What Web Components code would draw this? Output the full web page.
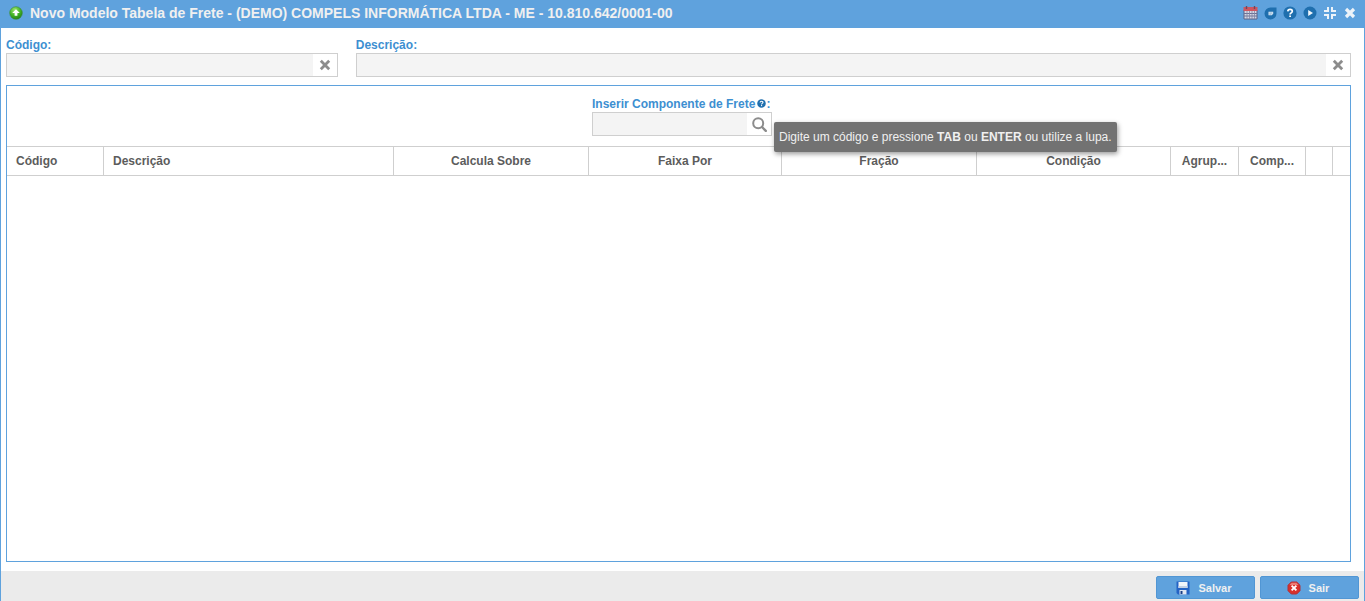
<!DOCTYPE html>
<html lang="pt-BR">
<head>
<meta charset="utf-8">
<title>Novo Modelo Tabela de Frete</title>
<style>
  html, body { height: 100%; }
  body {
    margin: 0;
    overflow: hidden;
    font: 12px/16px "Liberation Sans", Arial, sans-serif;
    --blue: #5fa2dd;
    --label: #3d8fd1;
    --line: #cfcfcf;
    --field: #f4f4f4;
  }
</style>
</head>
<body>

<app-window heading="Novo Modelo Tabela de Frete - (DEMO) COMPELS INFORMÁTICA LTDA - ME - 10.810.642/0001-00">
  <form-row>
    <text-field label="Código" icon="clear"></text-field>
    <text-field label="Descrição" icon="clear" class="wide"></text-field>
  </form-row>
  <frete-panel></frete-panel>
  <action-button slot="footer" icon="save">Salvar</action-button>
  <action-button slot="footer" icon="exit">Sair</action-button>
</app-window>

<script>
const icons = {
  add: `<svg width="14" height="14" viewBox="0 0 14 14"><defs><radialGradient id="g" cx=".4" cy=".25" r=".8"><stop offset="0" stop-color="#9be36c"/><stop offset=".55" stop-color="#43b426"/><stop offset="1" stop-color="#237d14"/></radialGradient></defs><circle cx="7" cy="7" r="6.3" fill="url(#g)" stroke="#3d8a39" stroke-width=".6"/><path d="M7 3.2 10.8 7H8.400v2.800H5.600V7H3.200z" fill="#fff"/></svg>`,
  calendar: `<svg width="15" height="14" viewBox="0 0 15 14"><path d="M1 4h13v9H1z" fill="#d5d8e4" stroke="#5f6284" stroke-width="1"/><path d="M.5 1h14v4H.5z" fill="#cf5660"/><path d="M3.500 0v3M11.500 0v3" stroke="#6b4a60" stroke-width="1.400"/><path d="M1 7.500h13M1 10h13" stroke="#6c7094" stroke-width="1"/><path d="M4 5v8M6.500 5v8M9 5v8M11.500 5v8" stroke="#8286a4" stroke-width=".8"/></svg>`,
  chat: `<svg width="13" height="13" viewBox="0 0 13 13"><path d="M6.500.5h6v6a6 6 0 1 1-6-6z" fill="#1f6fae"/><path d="M4.500 4.800h4.700v2L7.800 8.300H4.500z" fill="#d9e7f3"/><path d="M5.400 6h3M5.400 7.200h2" stroke="#6d9fc9" stroke-width=".6"/></svg>`,
  help: `<svg width="14" height="14" viewBox="0 0 14 14"><circle cx="7" cy="7" r="6.600" fill="#1f6fae"/><path d="M4.800 5.400C4.900 3.800 6 3.400 7.100 3.400c1.300 0 2.200.7 2.200 1.800 0 1.700-2.200 1.600-2.200 3.300" fill="none" stroke="#fff" stroke-width="1.700"/><path d="M6.200 9.500H8v1.600H6.200z" fill="#fff"/></svg>`,
  play: `<svg width="14" height="14" viewBox="0 0 14 14"><circle cx="7" cy="7" r="6.500" fill="#1f6fae"/><path d="M5.200 4 10 7l-4.800 3z" fill="#f2f7fb"/></svg>`,
  collapse: `<svg width="14" height="14" viewBox="0 0 14 14"><path d="M5 1v4H1M9 1v4h4M5 13V9H1M9 13V9h4" fill="none" stroke="#edf3f9" stroke-width="2"/></svg>`,
  close: `<svg width="12" height="12" viewBox="0 0 12 12"><path d="m2 2 8 8M10 2 2 10" stroke="#edf3f9" stroke-width="3.200"/></svg>`,
  clear: `<svg width="12" height="12" viewBox="0 0 12 12"><path d="m1.800 1.800 8.400 8.400M10.200 1.800 1.800 10.200" stroke="#8c8c8c" stroke-width="2.800"/></svg>`,
  search: `<svg width="15" height="15" viewBox="0 0 15 15"><circle cx="6.200" cy="6.200" r="5" fill="none" stroke="#8c8c8c" stroke-width="2"/><path d="m10 10 3.800 3.800" stroke="#8c8c8c" stroke-width="2.400" stroke-linecap="round"/></svg>`,
  save: `<svg width="14" height="14" viewBox="0 0 14 14"><path d="M.5.5h13v13H2L.5 12z" fill="#2463c4"/><path d="M2.500 1h9v6h-9z" fill="#f1f5fa"/><path d="M2.500 5h9v2h-9z" fill="#c3d1e4"/><path d="M3.500 9h7v4.500h-7z" fill="#dfe7f2"/><path d="M4.500 10h2v3h-2z" fill="#1b3f86"/></svg>`,
  exit: `<svg width="14" height="14" viewBox="0 0 14 14"><path d="M4.300 1h5.400L13 4.300v5.400L9.700 13H4.300L1 9.700V4.300z" fill="#d9302b" stroke="#b0303a" stroke-width="1" stroke-linejoin="round"/><path d="M2.500 4 4.600 1.800h4.800L11.500 4z" fill="#ee7d74"/><path d="m4.600 4.600 4.800 4.800M9.400 4.600 4.600 9.400" stroke="#fff" stroke-width="1.900"/></svg>`
};

function attach(el, html) {
  el.attachShadow({ mode: 'open' }).innerHTML = html;
}

class AppWindow extends HTMLElement {
  connectedCallback() {
    const tools = [['calendar', 'Calendário'], ['chat', 'Mensagens'], ['help', 'Ajuda'], ['play', 'Vídeo'], ['collapse', 'Restaurar'], ['close', 'Fechar']];
    attach(this, `
      <style>
        :host { display: flex; flex-direction: column; box-sizing: border-box; height: 100%; background: #fff; border: solid var(--blue); border-width: 0 1px; }
        header { display: flex; align-items: center; box-sizing: border-box; height: 28px; padding: 0 4px 2px 8px; background: var(--blue); color: #f0f0f0; }
        h1 { flex: 1; margin: 0 0 0 7px; font-size: 14px; line-height: 16px; white-space: nowrap; }
        .tools { display: flex; }
        .tools button { display: flex; align-items: center; justify-content: center; width: 20px; height: 20px; padding: 0; border: 0; background: none; cursor: pointer; }
        header > svg { flex: none; }
        main { flex: 1; display: flex; flex-direction: column; gap: 8px; min-height: 0; padding: 9px 13px 9px 5px; }
        footer { display: flex; justify-content: flex-end; gap: 5px; padding: 5px 5px 2px; background: #ebebeb; }
      </style>
      <header>
        ${icons.add}
        <h1>${this.getAttribute('heading')}</h1>
        <div class="tools">${tools.map(([icon, name]) => `<button type="button" aria-label="${name}">${icons[icon]}</button>`).join('')}</div>
      </header>
      <main><slot></slot></main>
      <footer><slot name="footer"></slot></footer>
    `);
  }
}

class FormRow extends HTMLElement {
  connectedCallback() {
    attach(this, `
      <style>
        :host { display: flex; gap: 18px; }
        ::slotted(*) { flex: 1; min-width: 0; }
        ::slotted(.wide) { flex: 3; }
      </style>
      <slot></slot>
    `);
  }
}

class TextField extends HTMLElement {
  connectedCallback() {
    const icon = this.getAttribute('icon');
    attach(this, `
      <style>
        :host { display: block; }
        label { display: block; height: 16px; color: var(--label); font-weight: bold; white-space: nowrap; }
        .box { display: flex; box-sizing: border-box; height: 24px; border: 1px solid var(--line); background: #fff; }
        input { flex: 1; min-width: 0; padding: 0 6px; border: 0; outline: 0; background: var(--field); font: inherit; color: #404040; }
        button { display: flex; align-items: center; justify-content: center; width: 24px; padding: 0; border: 0; background: #fff; cursor: pointer; }
      </style>
      <label for="value">${this.getAttribute('label')}<slot></slot>:</label>
      <div class="box">
        <input id="value" type="text">
        <button type="button" aria-label="${icon === 'search' ? 'Pesquisar' : 'Limpar'}">${icons[icon]}</button>
      </div>
    `);
  }
}

class HelpMark extends HTMLElement {
  connectedCallback() {
    attach(this, `
      <style>
        :host { display: inline-block; width: 9px; height: 9px; margin-left: 2px; }
        svg { display: block; width: 9px; height: 9px; }
      </style>
      ${icons.help}
    `);
  }
}

class HintTip extends HTMLElement {
  connectedCallback() {
    attach(this, `
      <style>
        :host { display: block; padding: 7px 5px; border-radius: 2px; background: #727272; color: #f0f0f0; white-space: nowrap; box-shadow: 1px 2px 5px rgba(0, 0, 0, .4); }
      </style>
      <slot></slot>
    `);
  }
}

class FreteGrid extends HTMLElement {
  connectedCallback() {
    const cols = [
      ['Código', 97, 'left'], ['Descrição', 0, 'left'], ['Calcula Sobre', 195], ['Faixa Por', 193], ['Fração', 195],
      ['Condição', 194], ['Agrup...', 68], ['Comp...', 67], ['', 27], ['', 17]
    ];
    attach(this, `
      <style>
        :host { display: block; }
        table { width: 100%; table-layout: fixed; border-collapse: separate; border-spacing: 0; }
        th { box-sizing: border-box; height: 30px; padding: 0 8px; border: solid var(--line); border-width: 1px 1px 1px 0; color: #5c5c5c; font-weight: bold; text-align: center; white-space: nowrap; }
        th.left { padding-left: 9px; text-align: left; }
        th:last-child { border-right: 0; }
      </style>
      <table>
        <colgroup>${cols.map(c => c[1] ? `<col style="width:${c[1]}px">` : '<col>').join('')}</colgroup>
        <thead><tr>${cols.map(c => `<th scope="col" class="${c[2] || ''}">${c[0]}</th>`).join('')}</tr></thead>
        <tbody></tbody>
      </table>
    `);
  }
}

class FretePanel extends HTMLElement {
  connectedCallback() {
    attach(this, `
      <style>
        :host { flex: 1; display: block; min-height: 0; border: 1px solid var(--blue); }
        .insert { display: flex; justify-content: center; padding: 10px 0 10px 7px; }
        .anchor { position: relative; width: 180px; }
        hint-tip { position: absolute; z-index: 1; top: 26px; left: 100%; margin-left: 2px; }
      </style>
      <div class="insert">
        <div class="anchor">
          <text-field label="Inserir Componente de Frete" icon="search"><help-mark></help-mark></text-field>
          <hint-tip role="tooltip">Digite um código e pressione <b>TAB</b> ou <b>ENTER</b> ou utilize a lupa.</hint-tip>
        </div>
      </div>
      <frete-grid></frete-grid>
    `);
  }
}

class ActionButton extends HTMLElement {
  connectedCallback() {
    attach(this, `
      <style>
        :host { display: block; }
        button { display: flex; align-items: center; justify-content: center; gap: 8px; box-sizing: border-box; width: 99px; height: 23px; padding: 0 3px 0 0; border: 1px solid #5196d4; border-radius: 2px; background: var(--blue); color: #f0f0f0; font: bold 11px/16px "Liberation Sans", Arial, sans-serif; cursor: pointer; }
      </style>
      <button type="button">${icons[this.getAttribute('icon')]}<slot></slot></button>
    `);
  }
}

customElements.define('hint-tip', HintTip);
customElements.define('help-mark', HelpMark);
customElements.define('text-field', TextField);
customElements.define('form-row', FormRow);
customElements.define('frete-grid', FreteGrid);
customElements.define('frete-panel', FretePanel);
customElements.define('action-button', ActionButton);
customElements.define('app-window', AppWindow);
</script>
</body>
</html>
